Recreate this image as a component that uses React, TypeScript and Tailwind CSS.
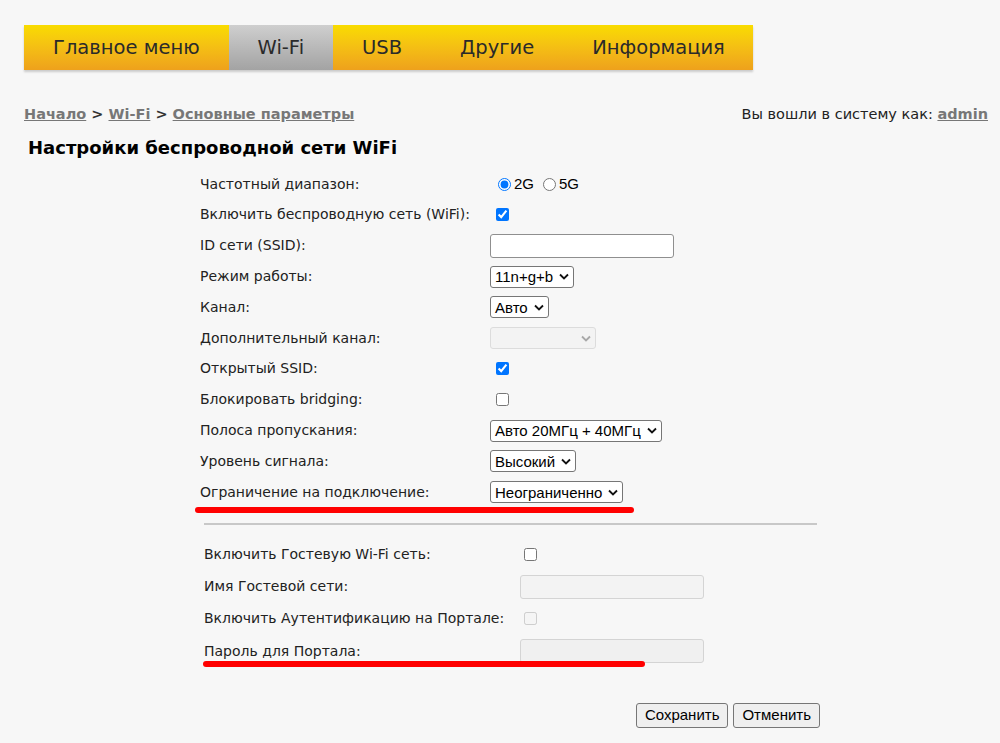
import React from 'react';

const NAV = ['Главное меню', 'Wi-Fi', 'USB', 'Другие', 'Информация'];

const labelFont = { fontFamily: '"DejaVu Sans", Verdana, sans-serif' };
const ctrlFont = { fontFamily: '"Liberation Sans", Arial, sans-serif' };

function Chevron({ disabled }: { disabled?: boolean }) {
  return (
    <svg width="10" height="7" viewBox="0 0 10 7" className="ml-1.5 shrink-0">
      <path d="M1 1.5 L5 5.5 L9 1.5" fill="none" stroke={disabled ? '#a8a8a8' : '#111'} strokeWidth="1.8" />
    </svg>
  );
}

function Select({ value, disabled, width }: { value?: string; disabled?: boolean; width?: string }) {
  return (
    <span
      style={ctrlFont}
      className={`inline-flex h-[22px] items-center justify-between rounded-[3px] border pl-[4px] pr-[4px] text-[15px] leading-none ${
        disabled ? 'border-[#dcdcdc] bg-[#f3f3f3] text-[#999]' : 'border-[#767676] bg-white text-black'
      } ${width ?? ''}`}
    >
      <span>{value}</span>
      <Chevron disabled={disabled} />
    </span>
  );
}

function Check({ checked, disabled }: { checked?: boolean; disabled?: boolean }) {
  return <input type="checkbox" defaultChecked={checked} disabled={disabled} className="m-0 h-[13px] w-[13px] accent-[#0075ff]" />;
}

function Row({ label, children, h = 'h-[30.8px]', ctrlW = 'w-[290px]' }: { label: string; children?: React.ReactNode; h?: string; ctrlW?: string }) {
  return (
    <div className={`flex items-center ${h}`}>
      <div className={`${ctrlW} shrink-0 whitespace-nowrap text-[14px] text-[#222]`} style={labelFont}>
        {label}
      </div>
      <div className="flex items-center">{children}</div>
    </div>
  );
}

export default function App() {
  return (
    <div className="min-h-[743px] w-[1000px] bg-[#f7f7f7] pl-[24px] pt-[25px]" style={labelFont}>
      <nav className="flex h-[45px] w-[729px] overflow-hidden shadow-[0_2px_2px_rgba(0,0,0,0.18)]">
        {NAV.map((n) => (
          <div
            key={n}
            className={`flex h-full shrink-0 items-center whitespace-nowrap px-[29px] text-[19.5px] text-[#2a2a2a] ${
              n === 'Wi-Fi'
                ? 'bg-gradient-to-b from-[#cfcfcf] to-[#a3a3a3]'
                : 'bg-gradient-to-b from-[#f9dc00] to-[#eea11c]'
            } ${n === 'Информация' ? 'grow' : ''}`}
          >
            {n}
          </div>
        ))}
      </nav>

      <div className="mt-[34px] flex items-center justify-between pr-[12px] text-[14.5px]">
        <div className="font-bold text-[#777]">
          <span className="underline">Начало</span>
          <span className="text-[#333]"> &gt; </span>
          <span className="underline">Wi-Fi</span>
          <span className="text-[#333]"> &gt; </span>
          <span className="underline">Основные параметры</span>
        </div>
        <div className="text-[#222]">
          Вы вошли в систему как: <span className="font-bold text-[#777] underline">admin</span>
        </div>
      </div>

      <h1 className="mt-[8px] pl-[4px] text-[18px] font-bold text-black">Настройки беспроводной сети WiFi</h1>

      <div className="ml-[176px] mt-[8px] w-[620px]">
        <Row label="Частотный диапазон:">
          <label className="ml-[8px] flex items-center gap-[3px] text-[15px]" style={ctrlFont}>
            <input type="radio" name="band" defaultChecked className="m-0 h-[13px] w-[13px] accent-[#0075ff]" />
            2G
          </label>
          <label className="ml-[9px] flex items-center gap-[3px] text-[15px]" style={ctrlFont}>
            <input type="radio" name="band" className="m-0 h-[13px] w-[13px] accent-[#0075ff]" />
            5G
          </label>
        </Row>
        <Row label="Включить беспроводную сеть (WiFi):">
          <span className="ml-[6px] flex">
            <Check checked />
          </span>
        </Row>
        <Row label="ID сети (SSID):">
          <span className="block h-[24px] w-[184px] rounded-[3px] border border-[#8f8f8f] bg-white" />
        </Row>
        <Row label="Режим работы:">
          <Select value="11n+g+b" />
        </Row>
        <Row label="Канал:">
          <Select value="Авто" />
        </Row>
        <Row label="Дополнительный канал:">
          <Select disabled width="w-[106px]" />
        </Row>
        <Row label="Открытый SSID:">
          <span className="ml-[6px] flex">
            <Check checked />
          </span>
        </Row>
        <Row label="Блокировать bridging:">
          <span className="ml-[6px] flex">
            <Check />
          </span>
        </Row>
        <Row label="Полоса пропускания:">
          <Select value="Авто 20МГц + 40МГц" />
        </Row>
        <Row label="Уровень сигнала:">
          <Select value="Высокий" />
        </Row>
        <div className="relative">
          <Row label="Ограничение на подключение:">
            <Select value="Неограниченно" />
          </Row>
          <div className="absolute left-[-5px] top-[30px] h-[6px] w-[439px] rounded-full bg-[#ff0000]" />
        </div>

        <div className="ml-[4px] mt-[15px] h-[2px] w-[613px] bg-[#c8c8c8]" />

        <div className="ml-[4px] mt-[14px]">
          <Row label="Включить Гостевую Wi-Fi сеть:" h="h-[32px]" ctrlW="w-[316px]">
            <span className="ml-[4px] flex">
              <Check />
            </span>
          </Row>
          <Row label="Имя Гостевой сети:" h="h-[32px]" ctrlW="w-[316px]">
            <span className="block h-[24px] w-[184px] rounded-[3px] border border-[#d4d4d4] bg-[#f3f3f3]" />
          </Row>
          <Row label="Включить Аутентификацию на Портале:" h="h-[32px]" ctrlW="w-[316px]">
            <span className="ml-[4px] flex">
              <Check disabled />
            </span>
          </Row>
          <div className="relative">
            <Row label="Пароль для Портала:" h="h-[33px]" ctrlW="w-[316px]">
              <span className="block h-[24px] w-[184px] rounded-[3px] border border-[#d4d4d4] bg-[#f0f0f0]" />
            </Row>
            <div className="absolute left-[-1px] top-[26px] h-[6px] w-[442px] rounded-full bg-[#ff0000]" />
          </div>
        </div>

        <div className="mt-[35px] flex justify-end gap-[5px]" style={ctrlFont}>
          <button className="h-[25px] rounded-[3px] border border-[#767676] bg-[#efefef] px-[8px] text-[15px] text-black">Сохранить</button>
          <button className="h-[25px] rounded-[3px] border border-[#767676] bg-[#efefef] px-[8px] text-[15px] text-black">Отменить</button>
        </div>
      </div>
    </div>
  );
}
